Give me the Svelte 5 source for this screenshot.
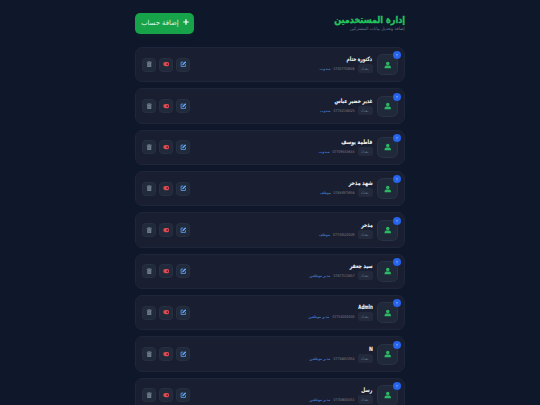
<script>
  const users = [
    { name: 'دكتورة ختام', nw: 25.5, phone: '07507700606', role: 'مندوب', rw: 11 },
    { name: 'غدير خضير عباس', nw: 38, phone: '07732156325', role: 'مندوب', rw: 10.5 },
    { name: 'فاطمة يوسف', nw: 31, phone: '07709343633', pw: 22, role: 'مندوب', rw: 11 },
    { name: 'شهد مذخر', nw: 24, phone: '07834975956', role: 'موظف', rw: 11 },
    { name: 'مذخر', nw: 11.5, phone: '07740520049', pw: 21.5, role: 'موظف', rw: 11 },
    { name: 'سيد جعفر', nw: 23, phone: '07877115857', role: 'مدير موظفين', rw: 21 },
    { name: 'Admin', nw: 14.5, phone: '07754000500', pw: 22, role: 'مدير موظفين', rw: 21 },
    { name: 'N', nw: 3.9, phone: '07738851952', role: 'مدير موظفين', rw: 21 },
    { name: 'رسل', nw: 11, phone: '07708605451', role: 'مدير موظفين', rw: 21 }
  ];

  function fit(node, width) {
    const text = node.firstElementChild;
    node.style.width = `${width}px`;
    text.style.transform = `scaleX(${width / text.getBoundingClientRect().width})`;
  }
</script>

<main dir="rtl">
  <header>
    <div class="heading">
      <h1 class="fit" use:fit={71}><span>إدارة المستخدمين</span></h1>
      <p class="fit" use:fit={55}><span>إضافة وتعديل بيانات المشتركين</span></p>
    </div>
    <button class="add">
      <svg viewBox="0 0 10 10"><path d="M5 2.2v5.6M2.2 5h5.6" /></svg>
      <span class="fit" use:fit={37.5}><span>إضافة حساب</span></span>
    </button>
  </header>

  {#each users as user}
    <article>
      <div class="avatar">
        <svg viewBox="0 0 24 24"><circle cx="12" cy="7" r="5.500" /><path d="M2 22v-3c0-4 3-5.500 7-5.500h6c4 0 7 1.500 7 5.500v3z" /></svg>
        <i class="badge"><svg viewBox="0 0 10 10"><path d="M3.500 3.500l1.500 1.500 1.500-1.500M4 6h2" /></svg></i>
      </div>
      <div class="info">
        <h2 class="fit" use:fit={user.nw}><span>{user.name}</span></h2>
        <div class="meta">
          <span class="city"><span class="fit" use:fit={8}><span>بغداد</span></span></span>
          <span class="fit phone" use:fit={user.pw ?? 21}><span>{user.phone}</span></span>
          <span class="fit role" use:fit={user.rw}><span>{user.role}</span></span>
        </div>
      </div>
      <div class="actions">
        <button class="edit" aria-label="تعديل">
          <svg viewBox="0 0 24 24"><path d="M12 4H4v16h16v-8" /><path d="M8 16l1-5 10-10 4 4-10 10z" class="solid" /></svg>
        </button>
        <button class="toggle" aria-label="تعطيل">
          <svg viewBox="0 0 24 24"><rect x="1" y="4" width="22" height="15" rx="7.500" /><circle cx="16" cy="11.500" r="3.500" /></svg>
        </button>
        <button class="delete" aria-label="حذف">
          <svg viewBox="0 0 24 24"><path d="M3 3h5l1-2h6l1 2h5v3H3zM4.500 7.500h15V22h-15z" /><path class="slots" d="M9 10v9M12 10v9M15 10v9" /></svg>
        </button>
      </div>
    </article>
  {/each}
</main>

<style>
  :global(body) { background: #0f172a; overflow: hidden; }
  main {
    width: 270px;
    height: 405px;
    margin: 0 auto;
    overflow: hidden;
    font-family: "DejaVu Sans", sans-serif;
  }
  header {
    display: flex;
    justify-content: space-between;
    height: 47px;
    box-sizing: border-box;
    padding-top: 13px;
  }
  h1, h2, p { margin: 0; }
  .fit { display: block; white-space: nowrap; flex: none; }
  .fit > span { display: inline-block; transform-origin: right center; }
  h1 { font-size: 9.5px; line-height: 13px; color: #22c55e; font-weight: 700; -webkit-text-stroke: 0.350px #22c55e; }
  p { font-size: 4.500px; line-height: 6px; color: #64748b; }
  button { padding: 0; border: 0; font-family: inherit; }
  svg { display: block; }
  .add {
    width: 59px;
    height: 21px;
    border-radius: 5px;
    background: #16a34a;
    color: #e5f6eb;
    display: flex;
    align-items: center;
    padding: 0 3px 2px 0;
    box-sizing: border-box;
    gap: 2px;
    font-size: 7px;
    line-height: 10px;
    box-shadow: 0 3px 7px #16a34a12;
  }
  .add svg { width: 10px; height: 10px; margin-top: -1px; fill: none; stroke: #fff; stroke-width: 1.200; }
  article {
    display: flex;
    align-items: center;
    height: 35.350px;
    margin-bottom: 6px;
    padding: 0 6px;
    box-sizing: border-box;
    border: 1px solid #1d263a;
    border-radius: 7px;
    background: #191e30;
  }
  .avatar {
    position: relative;
    width: 21px;
    height: 21px;
    box-sizing: border-box;
    border: 1px solid #293346;
    border-radius: 5.500px;
    background: #20293a;
    display: grid;
    place-items: center;
  }
  .avatar > svg { width: 7.500px; height: 8px; fill: #2bb965; }
  .badge {
    position: absolute;
    right: -4px;
    top: -4px;
    width: 8px;
    height: 8px;
    border-radius: 50%;
    background: #2563eb;
  }
  .badge svg { width: 8px; height: 8px; fill: none; stroke: #7da5f5; stroke-width: 0.800; }
  .info { margin-right: 4.500px; height: 21px; }
  h2 { font-size: 5.800px; line-height: 10px; color: #f1f5f9; font-weight: 700; -webkit-text-stroke: 0.100px #f1f5f9; }
  .meta { display: flex; align-items: center; gap: 3px; font-size: 3.800px; line-height: 5px; }
  .city {
    width: 15px;
    height: 9px;
    border-radius: 2px;
    background: #232a3b;
    color: #667085;
    display: grid;
    place-items: center;
  }
  .phone { color: #778296; }
  .role { color: #4c8de0; }
  .actions { display: flex; gap: 3px; margin-right: auto; }
  .actions button {
    width: 14px;
    height: 14px;
    box-sizing: border-box;
    border: 1px solid #273043;
    border-radius: 3.500px;
    background: #212a3b;
    display: grid;
    place-items: center;
  }
  .actions svg { width: 6.500px; height: 6.500px; }
  .edit path { fill: none; stroke: #60a5fa; stroke-width: 3; }
  .edit .solid { fill: #60a5fa; stroke: none; }
  .toggle rect { fill: #e04a52; }
  .toggle circle { fill: #3b2938; }
  .delete path { fill: #747e90; }
  .delete .slots { stroke: #465063; stroke-width: 1.200; }
</style>
